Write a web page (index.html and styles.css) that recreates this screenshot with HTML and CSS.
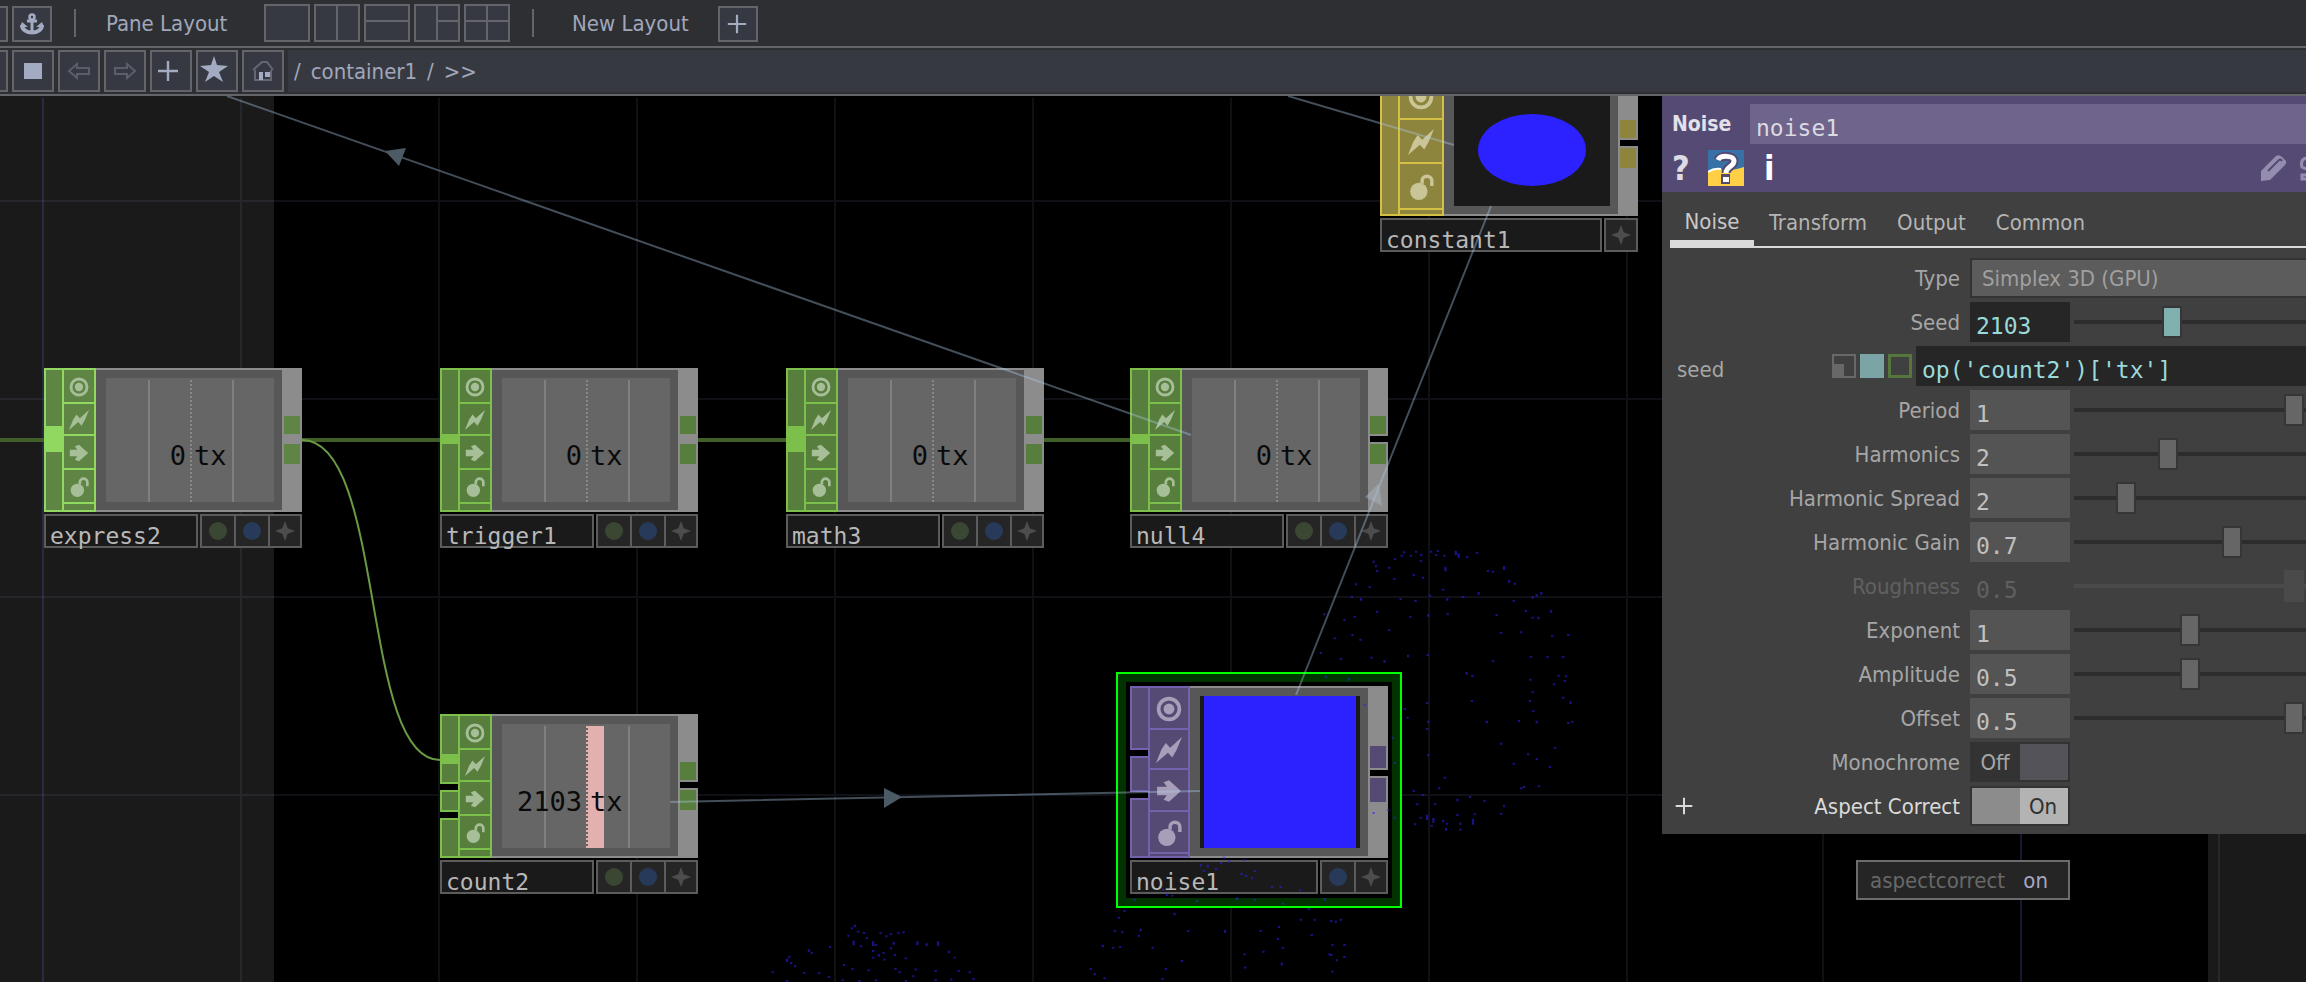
FILE: index.html
```html
<!DOCTYPE html>
<html lang="en">
<head>
<meta charset="utf-8">
<title>container1</title>
<link rel="stylesheet" href="styles.css">
</head>
<body>
<svg class="defs" width="0" height="0" aria-hidden="true">
  <symbol id="i-target" viewBox="0 0 24 24"><circle cx="12" cy="12" r="9.6" fill="none" stroke="currentColor" stroke-width="3.4"/><circle cx="12" cy="12" r="5" fill="currentColor"/></symbol>
  <symbol id="i-bolt" viewBox="0 0 24 24"><path d="M0 24 5 11.500 9 5.500l4 4.500L24 0l-5 12-4 7-4-4.500z" fill="currentColor"/></symbol>
  <symbol id="i-arrow" viewBox="0 0 24 24"><path d="M1 8h9L7 4l5-2 11 10-11 10-5-2 3-4H1z" fill="currentColor"/></symbol>
  <symbol id="i-lock" viewBox="0 0 24 24"><circle cx="10" cy="16" r="8" fill="currentColor"/><path d="M13 9V6a4.500 4 0 0 1 9 0v5" fill="none" stroke="currentColor" stroke-width="3.200"/></symbol>
  <symbol id="i-spark" viewBox="0 0 24 24"><path d="M12 1l3 8 8 3-8 3-3 8-3-8-8-3 8-3z" fill="currentColor"/></symbol>
  <symbol id="i-plus" viewBox="0 0 24 24"><path d="M12 2v20M2 12h20" stroke="currentColor" stroke-width="2.400"/></symbol>
</svg>

<header class="bar bar-top">
  <button class="tool cut" aria-label="Previous"></button>
  <button class="tool" aria-label="Anchor"><svg width="26" height="22" viewBox="0 0 26 22"><path d="M13 6v13M8 8h10" stroke="currentColor" stroke-width="3"/><circle cx="13" cy="4" r="2.500" fill="none" stroke="currentColor" stroke-width="2.500"/><path d="M3 12c0 10 20 10 20 0" fill="none" stroke="currentColor" stroke-width="4"/><path d="M1 14l2-5 6 5zM25 14l-2-5-6 5z" fill="currentColor"/></svg></button>
  <span class="sep"></span>
  <span class="caption">Pane Layout</span>
  <div class="layouts">
    <button class="pane" aria-label="Single pane"></button>
    <button class="pane" aria-label="Two columns"><svg viewBox="0 0 42 34"><path d="M21 0v34"/></svg></button>
    <button class="pane" aria-label="Two rows"><svg viewBox="0 0 42 34"><path d="M0 15h42"/></svg></button>
    <button class="pane" aria-label="One and two"><svg viewBox="0 0 42 34"><path d="M21 0v34M21 15h21"/></svg></button>
    <button class="pane" aria-label="Four panes"><svg viewBox="0 0 42 34"><path d="M21 0v34M0 15h42"/></svg></button>
  </div>
  <span class="sep"></span>
  <span class="caption wide">New Layout</span>
  <button class="tool plus" aria-label="Add layout"><svg width="22" height="22"><use href="#i-plus"/></svg></button>
</header>

<nav class="bar bar-path">
  <button class="tool cut" aria-label="Menu"></button>
  <button class="tool" aria-label="Stop"><svg width="18" height="16"><rect width="18" height="16" fill="currentColor"/></svg></button>
  <button class="tool dim" aria-label="Back"><svg width="24" height="18" viewBox="0 0 24 18"><path d="M2 9l8-7v4h12v6H10v4z" fill="none" stroke="currentColor" stroke-width="2"/></svg></button>
  <button class="tool dim" aria-label="Forward"><svg width="24" height="18" viewBox="0 0 24 18"><path d="M22 9l-8-7v4H2v6h12v4z" fill="none" stroke="currentColor" stroke-width="2"/></svg></button>
  <button class="tool plus" aria-label="Add"><svg width="24" height="24"><use href="#i-plus"/></svg></button>
  <button class="tool star" aria-label="Bookmark"><svg width="28" height="26" viewBox="0 0 28 26"><path d="M14 0l3 9 11 1-9 6 4 10-9-6-9 6 4-10-9-6 11-1z" fill="currentColor"/></svg></button>
  <button class="tool home" aria-label="Home"><svg width="24" height="22" viewBox="0 0 24 22"><path d="M2 10L11 2h5l6 8M4 10v10h16V10" fill="none" stroke="#646873" stroke-width="2"/><path d="M8 12h4v8H8zM14 12h5v5h-5z" fill="currentColor"/></svg></button>
  <div class="path"><a href="#root">/</a><a href="#container1">container1</a><span>/</span><span>&gt;&gt;</span></div>
</nav>

<main class="network">
  <div class="shade shade-left"></div>
  <div class="shade shade-right"></div>
  <svg class="layer" aria-hidden="true">
    <g transform="translate(0 -96)">
      <path class="gridline" d="M241 98V982M439 98V982M637 98V982M835 98V982M1033 98V982M1231 98V982M1429 98V982M1627 98V982M1823 98V982M2219 98V982M0 201H2306M0 399H2306M0 597H2306M0 795H2306"/>
      <path class="gridline major" d="M43 98V982M2021 98V982"/>
      <path class="wire thick" d="M0 440H44M302 440H440M698 440H786M1044 440H1130"/>
      <path class="wire" d="M302 440C386 440 360 760 440 760"/>
    </g>
  </svg>

  <section class="node chop bright n-express2">
    <div class="body">
      <div class="ins"><i class="in"><b class="lit tall"></b></i></div>
      <div class="flags"><button aria-label="Viewer"><svg><use href="#i-target"/></svg></button><button aria-label="Cook"><svg><use href="#i-bolt"/></svg></button><button aria-label="Bypass"><svg><use href="#i-arrow"/></svg></button><button aria-label="Lock"><svg><use href="#i-lock"/></svg></button><i></i></div>
      <div class="view"><div class="chart"><span class="val">0</span><span class="chan">tx</span></div></div>
      <div class="outs"><i class="port"></i><i class="split"></i><i class="port"></i></div>
    </div>
    <div class="foot"><span class="name">express2</span><span class="marks"><i class="dot g"></i><i class="dot b"></i><i class="spark"><svg><use href="#i-spark"/></svg></i></span></div>
  </section>

  <section class="node chop n-trigger1">
    <div class="body">
      <div class="ins"><i class="in"><b class="lit low"></b></i></div>
      <div class="flags"><button aria-label="Viewer"><svg><use href="#i-target"/></svg></button><button aria-label="Cook"><svg><use href="#i-bolt"/></svg></button><button aria-label="Bypass"><svg><use href="#i-arrow"/></svg></button><button aria-label="Lock"><svg><use href="#i-lock"/></svg></button><i></i></div>
      <div class="view"><div class="chart"><span class="val">0</span><span class="chan">tx</span></div></div>
      <div class="outs"><i class="port"></i><i class="split"></i><i class="port"></i></div>
    </div>
    <div class="foot"><span class="name">trigger1</span><span class="marks"><i class="dot g"></i><i class="dot b"></i><i class="spark"><svg><use href="#i-spark"/></svg></i></span></div>
  </section>

  <section class="node chop n-math3">
    <div class="body">
      <div class="ins"><i class="in"><b class="lit tall"></b></i></div>
      <div class="flags"><button aria-label="Viewer"><svg><use href="#i-target"/></svg></button><button aria-label="Cook"><svg><use href="#i-bolt"/></svg></button><button aria-label="Bypass"><svg><use href="#i-arrow"/></svg></button><button aria-label="Lock"><svg><use href="#i-lock"/></svg></button><i></i></div>
      <div class="view"><div class="chart"><span class="val">0</span><span class="chan">tx</span></div></div>
      <div class="outs"><i class="port"></i><i class="split"></i><i class="port"></i></div>
    </div>
    <div class="foot"><span class="name">math3</span><span class="marks"><i class="dot g"></i><i class="dot b"></i><i class="spark"><svg><use href="#i-spark"/></svg></i></span></div>
  </section>

  <section class="node chop n-null4">
    <div class="body">
      <div class="ins"><i class="in"><b class="lit low"></b></i></div>
      <div class="flags"><button aria-label="Viewer"><svg><use href="#i-target"/></svg></button><button aria-label="Cook"><svg><use href="#i-bolt"/></svg></button><button aria-label="Bypass"><svg><use href="#i-arrow"/></svg></button><button aria-label="Lock"><svg><use href="#i-lock"/></svg></button><i></i></div>
      <div class="view"><div class="chart"><span class="val">0</span><span class="chan">tx</span></div></div>
      <div class="outs"><i class="port"></i><i class="split open"></i><i class="port"></i></div>
    </div>
    <div class="foot"><span class="name">null4</span><span class="marks"><i class="dot g"></i><i class="dot b"></i><i class="spark"><svg><use href="#i-spark"/></svg></i></span></div>
  </section>

  <section class="node chop n-count2">
    <div class="body">
      <div class="ins"><i class="in first"><b class="lit"></b></i><i class="in second"></i><i class="in"></i></div>
      <div class="flags"><button aria-label="Viewer"><svg><use href="#i-target"/></svg></button><button aria-label="Cook"><svg><use href="#i-bolt"/></svg></button><button aria-label="Bypass"><svg><use href="#i-arrow"/></svg></button><button aria-label="Lock"><svg><use href="#i-lock"/></svg></button><i></i></div>
      <div class="view"><div class="chart peak"><span class="val">2103</span><span class="chan">tx</span></div></div>
      <div class="outs"><i class="port"></i><i class="split open"></i><i class="port"></i></div>
    </div>
    <div class="foot"><span class="name">count2</span><span class="marks"><i class="dot g"></i><i class="dot b"></i><i class="spark"><svg><use href="#i-spark"/></svg></i></span></div>
  </section>

  <section class="node mat n-constant1">
    <div class="body">
      <div class="ins"><i class="in"></i></div>
      <div class="flags"><button aria-label="Viewer"><svg><use href="#i-target"/></svg></button><button aria-label="Cook"><svg><use href="#i-bolt"/></svg></button><button aria-label="Lock"><svg><use href="#i-lock"/></svg></button><i></i></div>
      <div class="view"><div class="image"><div class="ball"></div></div></div>
      <div class="outs"><i class="port"></i><i class="split open"></i><i class="port"></i></div>
    </div>
    <div class="foot"><span class="name">constant1</span><span class="marks"><i class="spark"><svg><use href="#i-spark"/></svg></i></span></div>
  </section>

  <div class="selection">
    <section class="node top">
      <div class="body">
        <div class="ins"><i class="in first"></i><i class="in second"></i><i class="in"></i></div>
        <div class="flags"><button aria-label="Viewer"><svg><use href="#i-target"/></svg></button><button aria-label="Cook"><svg><use href="#i-bolt"/></svg></button><button aria-label="Bypass"><svg><use href="#i-arrow"/></svg></button><button aria-label="Lock"><svg><use href="#i-lock"/></svg></button><i></i></div>
        <div class="view"><div class="image"><div class="fill"></div></div></div>
        <div class="outs"><i class="port"></i><i class="split open"></i><i class="port"></i></div>
      </div>
      <div class="foot"><span class="name">noise1</span><span class="marks"><i class="dot b"></i><i class="spark"><svg><use href="#i-spark"/></svg></i></span></div>
    </section>
  </div>

  <svg class="layer" aria-hidden="true">
    <g transform="translate(0 -96)">
      <path class="link" d="M227 96L1191 435M1288 96L1454 145M1491 206L1296 695M670 802L1200 791"/>
      <path class="head" d="M385 151L406 148 399 166zM884 788V808L902 797z"/>
      <path class="head pale" d="M1379 483L1365 497 1382 506z"/>
      <g transform="translate(740 540) scale(.574 .3333)">
        <path class="dots" d="M1157 34v6M1153 44v6M1169 44v6M1178 32v6M1187 42v6M1186 60v6M1204 32v6M1216 30v6M1213 42v6M1227 44v6M1229 80v14M1247 32v14M1252 40v14M1267 48v6M1284 36v6M1141 54v6M1104 62v6M1108 76v6M1110 90v6M1131 80v6M1174 102v6M1190 110v6M1140 114v6M1303 90v6M1312 92v6M1331 78v12M1340 120v8M1350 128v6M1348 180v6M1225 146v6M1287 156v8M1260 168v6M1232 174v8M1202 164v6M1177 180v6M1151 174v6M1097 138v6M1073 130v6M1066 168v6M1082 174v8M1396 156v8M1388 162v8M1381 168v8M1369 210v6M1413 210v8M1318 222v6M1381 230v6M1391 230v8M1233 220v6M1199 222v8M1168 228v6M1110 212v6M1071 228v6M1053 236v6M1018 220v6M1131 268v6M1067 282v6M1036 292v6M1081 296v6M1326 276v6M1361 274v6M1415 284v6M1443 282v6M1012 336v6M1047 354v6M1100 350v6M1123 360v8M1164 344v8M1198 342v6M1312 360v6M1378 348v6M1407 348v6M1434 348v6M1266 396v8M1276 404v8M1377 416v6M1426 404v6M1439 406v6M1437 420v6M1418 430v6M1275 480v6M1381 454v6M1376 480v6M1382 510v6M1434 470v6M1447 484v8M1450 542v6M1443 546v6M1388 542v8M1357 540v6M1301 542v8M1021 408v6M1061 414v8M1158 504v6M1197 486v6M1163 530v6M1199 542v6M1197 564v6M1137 590v6M1326 608v6M1420 620v6M1373 640v6M1348 668v6M1388 654v6M1411 678v6M1199 642v6M1141 666v6M1228 710v6M1174 750v6M1218 742v6M1190 762v6M1180 790v6M1211 790v6M1250 776v8M1272 768v6M1297 780v6M1331 796v6M1361 742v6M1366 738v6M1392 736v6M1326 818v6M1280 820v6M1277 836v18M1250 822v6M1255 848v6M1232 848v6M1225 840v6M1208 834v14M1197 824v16M1186 830v6M1176 850v6M1205 854v6M1230 864v8M1255 866v6M1104 816v6M1129 808v6M1141 830v6M1088 492v6"/>
        <path class="dots" d="M843 950v6M852 960v8M878 958v6M803 972v8M815 974v8M838 966v6M829 984v6M808 990v6M897 990v6M874 998v8M882 1004v8M892 1012v6M927 1038v6M942 1038v6M976 1048v6M737 1046v6M744 1060v8M753 1064v6M796 1080v6M866 1072v8M897 1076v6M946 1088v6M1019 1074v8M991 1104v6M1001 1136v6M977 1136v6M1030 1140v6M1038 1142v6M1047 1136v6M757 1118v8M687 1076v6M670 1110v6M660 1130v6M653 1170v6M666 1174v6M698 1166v8M695 1184v6M781 1170v6M845 1170v8M907 1170v6M939 1158v6M937 1194v6M996 1182v6M1053 1212v6M1053 1248v6M1032 1212v6M1027 1240v6M1030 1242v6M1040 1258v6M1032 1292v6M946 1220v6M912 1232v6M879 1240v6M944 1268v8M880 1280v6M770 1260v6M742 1284v6M719 1220v6M662 1218v6M650 1220v6M632 1214v8M611 1284v6M618 1300v6M635 1312v6M736 1314v6"/>
        <path class="dots" d="M200 1154v8M195 1162v6M206 1172v6M189 1184v6M221 1192v6M216 1176v6M245 1176v6M263 1180v6M276 1176v6M285 1174v6M255 1186v6M198 1202v14M211 1216v6M232 1204v14M237 1212v6M268 1206v8M309 1204v12M325 1210v8M345 1204v14M232 1230v6M242 1242v8M250 1236v6M252 1256v6M270 1242v6M263 1222v6M232 1250v6M289 1252v6M364 1232v8M374 1250v6M157 1218v6M120 1228v8M125 1236v6M86 1248v6M82 1256v10M89 1266v6M96 1276v6M57 1294v6M82 1320v6M112 1296v6M138 1296v6M181 1272v6M196 1284v6M224 1288v6M271 1284v6M278 1294v6M306 1286v6M302 1306v6M341 1290v6M381 1290v6M400 1294v6M407 1314v6M368 1316v6M341 1318v6M289 1320v6M237 1318v6M208 1320v6M179 1318v6M155 1308v6"/>
      </g>
    </g>
  </svg>

  <aside class="panel">
    <div class="head-block">
      <div class="title-row"><label class="op-type" for="opname">Noise</label><input id="opname" class="op-name" value="noise1"></div>
      <div class="help-row">
        <button class="help q" aria-label="Help">?</button>
        <button class="help py" aria-label="Python help"><svg width="36" height="36" viewBox="0 0 36 36"><path fill="#3672a5" d="M0 0h36v22H0z"/><path d="M0 22c8-6 20 1 36-5v19H0z" fill="#ffd046"/><path d="M0 22c4-3 8-4 13-3" fill="none" stroke="#fff" stroke-width="2"/><path d="M10 10c2-5 16-5 16 1 0 6-8 5-8 12" fill="none" stroke="#554a73" stroke-width="9"/><path d="M13 24h9v10h-9z" fill="#554a73"/><path d="M10 10c2-5 16-5 16 1 0 6-8 5-8 12" fill="none" stroke="#fff" stroke-width="5"/><path d="M15 27h6v5h-6z" fill="#fff"/></svg></button>
        <button class="help" aria-label="Info">i</button>
        <span class="grow"></span>
        <button class="help edit" aria-label="Edit"><svg width="28" height="28" viewBox="0 0 28 28"><path d="M1 27V17L16 2q3-2 6 1l4 4q1 2-1 4L10 26z" fill="#958db0"/><path d="M8 17L19 6q2-1 3 1" fill="none" stroke="#554a73" stroke-width="2"/></svg></button>
        <button class="help edge" aria-label="Comment"><svg width="6" height="26" viewBox="0 0 6 26"><path d="M6 3q-6 2-4 9l4 2M6 20H2v4h4" fill="none" stroke="#958db0" stroke-width="3"/></svg></button>
      </div>
    </div>
    <div class="tabs"><button class="tab on">Noise</button><button class="tab">Transform</button><button class="tab">Output</button><button class="tab">Common</button></div>
    <form class="params">
      <div class="row menu"><label for="type">Type</label><select id="type"><option>Simplex 3D (GPU)</option></select></div>
      <div class="row driven"><label for="seed">Seed</label><input id="seed" value="2103"><input type="range" aria-label="Seed slider" min="0" max="1" step="any" value="0.415"></div>
      <div class="row expr"><label for="expr">seed</label><span class="modes"><button type="button" class="mode" aria-label="Constant"></button><button type="button" class="mode active" aria-label="Expression"></button><button type="button" class="mode export" aria-label="Export"></button></span><input id="expr" value="op('count2')['tx']"></div>
      <div class="row"><label for="period">Period</label><input id="period" value="1"><input type="range" aria-label="Period slider" min="0" max="1" step="any" value="0.99"></div>
      <div class="row"><label for="harm">Harmonics</label><input id="harm" value="2"><input type="range" aria-label="Harmonics slider" min="0" max="1" step="any" value="0.396"></div>
      <div class="row"><label for="spread">Harmonic Spread</label><input id="spread" value="2"><input type="range" aria-label="Harmonic Spread slider" min="0" max="1" step="any" value="0.198"></div>
      <div class="row"><label for="gain">Harmonic Gain</label><input id="gain" value="0.7"><input type="range" aria-label="Harmonic Gain slider" min="0" max="1" step="any" value="0.7"></div>
      <div class="row off"><label for="rough">Roughness</label><input id="rough" value="0.5" disabled><input type="range" aria-label="Roughness slider" min="0" max="1" step="any" value="0.99" disabled></div>
      <div class="row"><label for="expo">Exponent</label><input id="expo" value="1"><input type="range" aria-label="Exponent slider" min="0" max="1" step="any" value="0.5"></div>
      <div class="row"><label for="amp">Amplitude</label><input id="amp" value="0.5"><input type="range" aria-label="Amplitude slider" min="0" max="1" step="any" value="0.5"></div>
      <div class="row"><label for="offs">Offset</label><input id="offs" value="0.5"><input type="range" aria-label="Offset slider" min="0" max="1" step="any" value="0.99"></div>
      <div class="row"><label for="mono">Monochrome</label><span class="switch"><input type="checkbox" id="mono"><span>Off</span><span></span></span></div>
      <div class="row current"><button type="button" class="more" aria-label="Expand parameter"><svg width="20" height="20"><use href="#i-plus"/></svg></button><label for="aspect">Aspect Correct</label><span class="switch"><input type="checkbox" id="aspect" checked><span></span><span>On</span></span></div>
    </form>
  </aside>
  <div class="tooltip" role="tooltip"><span>aspectcorrect</span><b>on</b></div>
</main>
</body>
</html>
```
FILE: styles.css
```css
* { box-sizing: border-box; }
body {
  margin: 0;
  height: 100vh;
  display: flex;
  flex-direction: column;
  overflow: hidden;
  background: #000;
  color: #a0a7bb;
  font: 22px/28px "DejaVu Sans Condensed", "DejaVu Sans", sans-serif;
}
button, input, select { font: inherit; color: inherit; margin: 0; padding: 0; border: 0; border-radius: 0; background: none; min-width: 0; }
svg { display: block; }
.defs { position: absolute; }

/* toolbars */
.bar { display: flex; align-items: center; height: 48px; flex: none; background: #2e2f33; border-bottom: 2px solid #64656a; }
.tool { display: grid; place-items: center; border: 2px solid #64656a; background: #363941; color: #a3abc2; }
.bar-top .tool { width: 40px; height: 36px; margin-top: 2px; }
.bar-top .plus { padding-right: 2px; }
.bar-path .tool { width: 42px; height: 42px; margin-right: 4px; }
.bar-path .plus, .bar-path .star { padding-right: 6px; }
.bar-path .star { padding-bottom: 4px; }
.bar .tool.cut { width: 8px; margin-right: 4px; border-left: 0; }
.bar .tool.dim { color: #5c5f69; }
.sep { width: 2px; height: 28px; margin-left: 22px; background: #64656a; }
.caption { margin-left: 30px; width: 158px; padding-top: 2px; }
.caption.wide { margin-left: 38px; width: 146px; }
.layouts { display: flex; gap: 4px; }
.pane { width: 46px; height: 38px; border: 2px solid #64656a; background: #363941; }
.pane svg { width: 42px; height: 34px; fill: none; stroke: #64656a; stroke-width: 2; }
.path { flex: 1; height: 42px; display: flex; align-items: center; gap: 10px; padding: 2px 0 0 6px; background: #373941; }
.path a { color: inherit; text-decoration: none; }

/* network */
.network { position: relative; flex: 1; overflow: hidden; }
.shade { position: absolute; top: 0; bottom: 0; background: #1a1a1a; }
.shade-left { left: 0; width: 274px; }
.shade-right { left: 2208px; right: 0; }
.layer { position: absolute; left: 0; top: 0; width: 100%; height: 100%; pointer-events: none; }
.gridline { fill: none; stroke: rgba(110, 110, 160, .14); stroke-width: 2; }
.gridline.major { stroke: rgba(90, 90, 200, .25); }
.wire { fill: none; stroke: #6a9a43; stroke-width: 2; }
.wire.thick { stroke: #3f5e28; stroke-width: 4; }
.link { fill: none; stroke: rgba(175, 205, 235, .38); stroke-width: 2; }
.head { fill: #4c5a66; }
.head.pale { fill: rgba(170, 185, 195, .45); }
.dots { fill: none; stroke: #2a22f0; stroke-opacity: .55; stroke-width: 4; }

/* nodes */
.node { position: absolute; width: 258px; --edge: #7cc04b; --face: #587e3e; --icon: #a7bf98; }
.node.bright { --edge: #90d860; --face: #5f8545; }
.node.mat { --edge: #d3c045; --face: #8d843e; --icon: #cac596; }
.node.top { --edge: #7462ae; --face: #554a73; --icon: #a79fb9; }
.n-express2 { left: 44px; top: 272px; }
.n-trigger1 { left: 440px; top: 272px; }
.n-math3 { left: 786px; top: 272px; }
.n-null4 { left: 1130px; top: 272px; }
.n-count2 { left: 440px; top: 618px; }
.n-constant1 { left: 1380px; top: -24px; }
.body { display: grid; grid-template-columns: 18px 34px 1fr 20px; height: 144px; }
.mat .body { grid-template-columns: 18px 46px 1fr 20px; }
.top .body { grid-template-columns: 18px 42px 1fr 20px; height: 172px; }
.ins { display: flex; flex-direction: column; gap: 6px; background: #000; }
.in { display: flex; flex-direction: column; flex: 1; border: 2px solid var(--edge); border-right: 0; background: var(--face); }
.in.first { flex: none; height: 70px; }
.in.second { flex: none; height: 22px; }
.top .in.first { height: 64px; }
.top .in.second { height: 36px; }
.lit { height: 10px; margin-top: 38px; background: var(--edge); }
.lit.low { margin-top: 64px; }
.lit.tall { height: 26px; margin-top: 56px; }
.flags { display: grid; grid-template-rows: 32px 30px 32px 32px 6px; gap: 2px; padding: 2px; background: var(--edge); }
.top .flags { grid-template-rows: 40px 38px 40px 40px 2px; }
.mat .flags { grid-template-rows: 44px 42px 44px 4px; }
.flags > * { display: grid; place-items: center; background: var(--face); color: var(--icon); }
.flags button { padding-top: 2px; }
.flags svg { width: 20px; height: 20px; }
.top .flags svg, .mat .flags svg { width: 26px; height: 26px; }
.view { display: flex; padding: 8px 8px 8px 10px; border-top: 2px solid #8c8c8c; border-bottom: 2px solid #8c8c8c; background: #575757; }
.chart {
  flex: 1; display: grid; grid-template-columns: 80px 1fr; column-gap: 8px; align-items: center; padding-top: 32px;
  color: #0a0a0a; font: 27px/32px "DejaVu Sans Mono", monospace;
  background:
    linear-gradient(#808080, #808080) 42px 2px / 2px 100% no-repeat,
    repeating-linear-gradient(#888 0 2px, #666 2px 4px) 84px 2px / 2px 100% no-repeat,
    linear-gradient(#808080, #808080) 126px 2px / 2px 100% no-repeat,
    #666;
}
.chart.peak {
  background:
    linear-gradient(#e3b0b0, #e3b0b0) 86px 2px / 16px 122px no-repeat,
    linear-gradient(#808080, #808080) 42px 2px / 2px 100% no-repeat,
    repeating-linear-gradient(#e3b0b0 0 2px, #666 2px 4px) 84px 2px / 2px 100% no-repeat,
    linear-gradient(#808080, #808080) 126px 2px / 2px 100% no-repeat,
    #666;
}
.val { text-align: right; }
.image { flex: 1; display: flex; justify-content: center; background: #1a1a1a; }
.fill { flex: 1; margin: 0 4px; background: #2b22ff; }
.ball { width: 108px; height: 72px; margin-top: 32px; border-radius: 50%; background: #2b22ff; }
.outs { display: flex; flex-direction: column; gap: 2px; padding: 48px 0 0 2px; background: #8c8c8c; }
.port { height: 18px; margin-right: 2px; background: var(--face); }
.split { height: 6px; }
.split.open { background: #000; }
.port:last-child { height: 20px; }
.top .outs { padding-top: 60px; }
.top .port { height: 22px; }
.top .port:last-child { height: 24px; }
.foot { display: flex; gap: 2px; margin-top: 2px; height: 34px; }
.name { flex: 1; padding: 7px 0 0 4px; border: 2px solid #5c5c5c; background: #1a1a1a; color: #b8b8b8; font: 23px/26px "DejaVu Sans Mono", monospace; }
.marks { display: flex; gap: 2px; padding: 2px; background: #5c5c5c; }
.marks > i { width: 32px; display: grid; place-items: center; background: #252525; }
.mat .marks > i { width: 30px; }
.marks .spark { width: 30px; color: #4c4c4c; }
.spark svg { width: 22px; height: 22px; }
.dot::before { content: ""; width: 18px; height: 18px; border-radius: 50%; background: #3a4732; }
.dot.b::before { background: #283a5a; }
.selection { position: absolute; left: 1116px; top: 576px; width: 286px; height: 236px; border: 2px solid #00ff00; background: #000; box-shadow: inset 0 0 0 8px #003300; }
.selection .node { left: 12px; top: 12px; }

/* parameter panel */
.panel { position: absolute; left: 1662px; right: 0; top: 0; background: #404040; color: #a6a6a6; }
.head-block { height: 96px; padding-top: 8px; background: #554a73; }
.title-row { display: flex; align-items: center; height: 40px; }
.op-type { width: 88px; padding-left: 10px; color: #e2e0e8; font-weight: bold; font-size: 21px; }
.op-name { flex: 1; height: 40px; padding: 7px 0 0 6px; background: #6f648c; color: #dcdae2; font: 23px/28px "DejaVu Sans Mono", monospace; }
.help-row { display: flex; align-items: center; height: 48px; padding-left: 10px; }
.help { height: 36px; color: #fff; font-weight: bold; font-size: 34px; line-height: 36px; }
.help.q { width: 36px; text-align: left; color: #dddbe4; }
.help.py { margin-right: 20px; }
.grow { flex: 1; }
.edit { margin-right: 12px; display: grid; place-items: center; }
.edge { display: grid; place-items: center; }
.tabs { display: flex; height: 56px; margin-left: 8px; border-bottom: 2px solid #dadada; }
.tab { height: 56px; padding: 6px 15px 0; color: #b4b4b4; }
.tab.on { width: 84px; padding: 12px 0 0; border-bottom: 8px solid #dadada; color: #c8c8c8; }
.params { display: grid; gap: 4px; padding: 10px 0 8px; }
.row { position: relative; display: grid; grid-template-columns: 298px 100px 1fr; column-gap: 10px; align-items: center; height: 40px; }
.row label { padding-top: 2px; text-align: right; }
.row > input { height: 40px; }
.row > input:not([type=range]) { padding: 7px 0 0 6px; background: #545454; color: #c0c0c0; font: 23px/28px "DejaVu Sans Mono", monospace; }
.row.menu { grid-template-columns: 298px 1fr; }
.row select { height: 40px; padding: 2px 0 0 10px; border: 2px solid #333; border-right: 0; background: #5c5c5c; color: #a0a0a0; appearance: none; }
.row.driven > input:not([type=range]), .row.expr > input { background: #262626; color: #9adada; }
.row.expr { display: flex; column-gap: 4px; }
.row.expr label { width: 166px; padding: 8px 0 0 15px; text-align: left; }
.row.expr > input:last-child { flex: 1; }
.modes { display: flex; gap: 4px; }
.mode { width: 24px; height: 24px; border: 2px solid #686868; background: linear-gradient(#686868, #686868) 0 100% / 10px 12px no-repeat, #404040; }
.mode.active { border: 0; background: #7ba5a5; }
.mode.export { border: 3px solid #55763c; background: #404040; }
input[type=range] { appearance: none; width: 100%; height: 40px; margin-left: -6px; }
.row > input[type=range] { width: calc(100% + 6px); }
input[type=range]::-webkit-slider-runnable-track { height: 4px; background: #2d2d2d; }
input[type=range]::-webkit-slider-thumb { appearance: none; width: 20px; height: 32px; margin-top: -14px; border: 2px solid #363636; border-radius: 0; background: #666; }
.driven input[type=range]::-webkit-slider-thumb { background: #80b0b0; }
.row.off { color: #606060; }
.row.off > input:not([type=range]) { background: none; color: #606060; }
.off input[type=range]::-webkit-slider-runnable-track { background: #4a4a4a; }
.off input[type=range]::-webkit-slider-thumb { border-color: #4a4a4a; background: #4a4a4a; }
.switch { position: relative; display: grid; grid-template-columns: 1fr 1fr; height: 40px; border: 2px solid #333; background: #333; }
.switch input { position: absolute; inset: 0; opacity: 0; }
.switch span { display: grid; place-items: center; padding: 2px 2px 0 0; }
.switch input:not(:checked) ~ span:last-child { background: #545359; }
.switch input:checked + span { background: #8c8c8c; }
.switch input:checked ~ span:last-child { background: #b3b3b3; color: #303030; }
.row.current { color: #dadada; }
.more { position: absolute; left: 12px; top: 10px; }
.tooltip { position: absolute; left: 1856px; top: 764px; width: 214px; height: 40px; display: flex; justify-content: space-between; align-items: center; padding: 2px 20px 0 12px; border: 2px solid #6c6c6c; background: #252525; color: #686868; }
.tooltip b { font-weight: normal; color: #a5a5c4; }
```
